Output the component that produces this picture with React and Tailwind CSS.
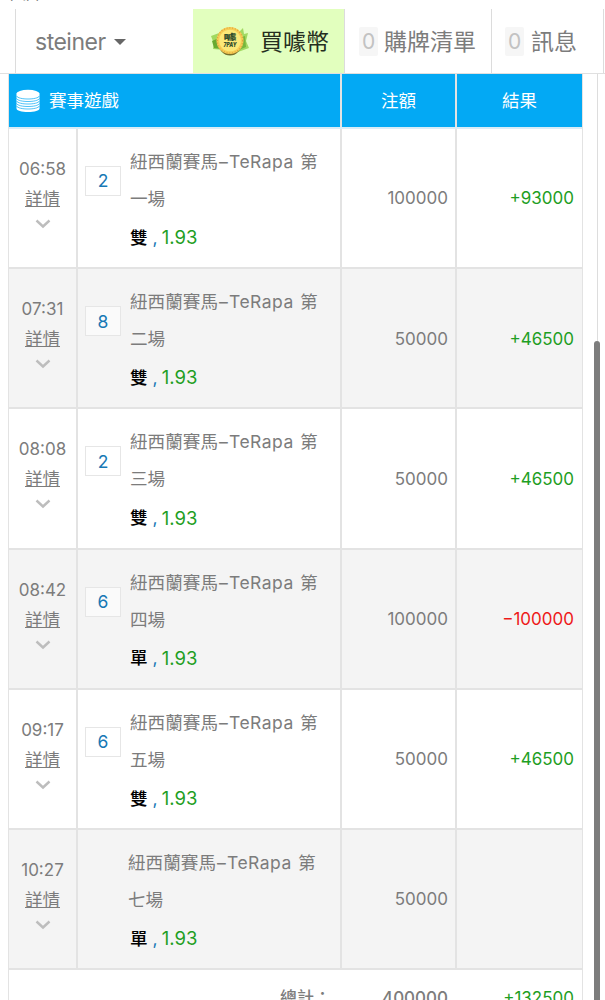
const rows = [
  { time: "06:58", no: "2", race: "一場", pick: "雙", stake: "100000", result: "+93000" },
  { time: "07:31", no: "8", race: "二場", pick: "雙", stake: "50000", result: "+46500" },
  { time: "08:08", no: "2", race: "三場", pick: "雙", stake: "50000", result: "+46500" },
  { time: "08:42", no: "6", race: "四場", pick: "單", stake: "100000", result: "−100000" },
  { time: "09:17", no: "6", race: "五場", pick: "雙", stake: "50000", result: "+46500" },
  { time: "10:27", no: "", race: "七場", pick: "單", stake: "50000", result: "" },
];

function Coin() {
  return (
    <svg width="40" height="34" viewBox="0 0 40 34" className="block shrink-0">
      <path d="M1 12 9 9 14 26 3 25 4 20Z" fill="#a0d960" />
      <path d="M2 17 9 14 12 25 4 24Z" fill="#68aa30" />
      <path d="M27 10 33 4 34 10 38 9 36 17 39 24 28 28Z" fill="#a2d962" />
      <path d="M29 14 35 12 36 23 29 26Z" fill="#76b63c" />
      <ellipse cx="20" cy="19.500" rx="11.500" ry="12" fill="#77702d" />
      <circle cx="20" cy="16.500" r="13.500" fill="#f6cd55" />
      <circle cx="20" cy="16.500" r="12.700" fill="none" stroke="#dda03c" strokeWidth="1.200" strokeDasharray="1 1.800" />
      <circle cx="20" cy="16.500" r="10.800" fill="#fbe878" />
      <text x="20" y="16" textAnchor="middle" fontSize="8.500" fontWeight="900" fontFamily="Noto Sans CJK TC" fill="#34502d" textLength="13" lengthAdjust="spacingAndGlyphs">噱</text>
      <text x="20" y="23" textAnchor="middle" fontSize="6.500" fontStyle="italic" fontWeight="900" fontFamily="Inter" fill="#34502d" textLength="13" lengthAdjust="spacingAndGlyphs">7PAY</text>
    </svg>
  );
}

function Stack() {
  return (
    <svg width="24" height="24" viewBox="0 0 24 24" className="block">
      <path d="M.5 4.500v15c0 2.200 5 3.500 11.500 3.500s11.500-1.300 11.500-3.500v-15" fill="white" />
      <ellipse cx="12" cy="4.500" rx="11.500" ry="3.700" fill="white" />
      <path d="M.5 7c1.200 2 6 3 11.500 3s10.300-1 11.500-3M.5 9.500c1.200 2 6 3 11.500 3s10.300-1 11.500-3M.5 12c1.200 2 6 3 11.500 3s10.300-1 11.500-3M.5 14.500c1.200 2 6 3 11.500 3s10.300-1 11.500-3M.5 17c1.200 2 6 3 11.500 3s10.300-1 11.500-3" fill="none" stroke="#03a9f4" strokeWidth=".7" />
    </svg>
  );
}

function Row({ row, index }) {
  return (
    <div className={`grid h-[140.200px] grid-cols-[69px_264px_115px_125px] border-b-2 border-[#e3e3e3] ${index % 2 ? "bg-[#f4f4f4]" : "bg-white"}`}>
      <div className="flex flex-col items-center border-r-2 border-[#e3e3e3] pt-[25px]">
        <span className="text-[17px] leading-[30px]">{row.time}</span>
        <span className="text-[17.500px] leading-[30px] underline underline-offset-1">詳情</span>
        <svg width="16" height="10" viewBox="0 0 16 10" className="mt-[5px]"><path d="M1.500 1.500 8 7.500 14.500 1.500" fill="none" stroke="#bdbdbd" strokeWidth="2.400" /></svg>
      </div>
      <div className="flex border-r-2 border-[#e3e3e3] pl-[7px]">
        <div className="w-[44px] pt-[37px]">
          {row.no && <div className="flex h-[30px] w-[36px] items-center justify-center border border-[#e6e6e6] bg-white/50 pt-px text-[17.500px] text-[#1778b5]">{row.no}</div>}
        </div>
        <div className="whitespace-nowrap pt-[14px]">
          <div className={row.no ? "pl-px" : "-ml-[1px]"}>
            <div className="flex h-[37px] text-[17.600px] leading-[37px]">
              <span>紐西蘭賽馬</span>
              <span className="inline-block w-[11px] text-center">–</span>
              <span className="w-[71px] text-[17.500px] tracking-[0.500px]">TeRapa </span>
              <span>第</span>
            </div>
            <div className="h-[37px] text-[17.600px] leading-[37px]">{row.race}</div>
          </div>
          <div className="flex h-[42px] items-center pl-px text-[17.600px] text-[#1e9e23]">
            <span className="font-medium text-black">{row.pick}</span>
            <span className="ml-[5px] mr-[4px] text-[#1778b5]">,</span><span className="text-[18.500px]">1.93</span>
          </div>
        </div>
      </div>
      <div className="flex items-center justify-end border-r-2 border-[#e3e3e3] pr-[7px] pt-[2px]">{row.stake}</div>
      <div className={`flex items-center justify-end pr-[8px] pt-[2px] ${row.result.startsWith("−") ? "text-[#ee1919]" : "text-[#1e9e23]"}`}>{row.result}</div>
    </div>
  );
}

function Count() {
  return <span className="flex h-[29px] w-[19px] items-center justify-center rounded-[2px] bg-[#f6f6f6] pt-[2px] text-[21px] text-[#c2c2c2]">0</span>;
}

export default function App() {
  return (
    <div className="flex h-[1000px] w-[605px] flex-col overflow-hidden bg-white font-['Inter','Noto_Sans_CJK_TC',sans-serif] text-[17px] font-normal text-[#7c7c7c]">
      <div className="h-[9px] shrink-0 overflow-hidden pl-[10px] text-[17px] leading-[18px]"><div className="-mt-[17px]">, (, ,</div></div>
      <header className="flex h-[65px] shrink-0 border-b border-[#e0e0e0] pl-[15px] text-[23px]">
        <div className="flex w-[178px] items-center border-l border-[#dcdcdc] pl-[19px] pt-[2px]">
          <span className="tracking-[-0.500px]">steiner</span>
          <svg width="12" height="6" viewBox="0 0 12 6" className="ml-[8px]"><path d="M0 0h12L6 6Z" fill="#666" /></svg>
        </div>
        <div className="flex w-[152px] items-center border-r border-[#dcdcdc] bg-[#e2ffbe] pl-[17px] text-[#252e20]"><Coin /><span className="ml-[10px] pt-[3px]">買噱幣</span></div>
        <div className="flex w-[147px] items-center border-r border-[#dcdcdc] pl-[14px]"><Count /><span className="ml-[6px] pt-[2px]">購牌清單</span></div>
        <div className="flex w-[112px] items-center border-r border-[#dcdcdc] pl-[13px]"><Count /><span className="ml-[7px] pt-[2px]">訊息</span></div>
      </header>
      <div className="flex h-[926px] shrink-0 pl-[8px]">
        <main className="w-[575px] shrink-0 border-x border-[#e3e3e3]">
          <div className="grid h-[55px] grid-cols-[333px_115px_125px] border-b-2 border-[#d9edf7] bg-[#03a9f4] text-[17.500px] text-white">
            <div className="flex items-center border-r-2 border-[#e3e3e3] pl-[7px]"><Stack /><span className="ml-[9px] pt-px">賽事遊戲</span></div>
            <div className="flex items-center justify-center border-r-2 border-[#e3e3e3] pt-px">注額</div>
            <div className="flex items-center justify-center pt-px">結果</div>
          </div>
          {rows.map((row, i) => <Row key={row.time} row={row} index={i} />)}
          <div className="grid grid-cols-[333px_115px_125px] pt-[15px] text-right text-[17px] leading-[26px]">
            <div className="pr-[11px] font-medium">總計：</div>
            <div className="pr-[9px] font-medium">400000</div>
            <div className="pr-[8px]"><span className="text-[#1e9e23]">+132500</span></div>
          </div>
        </main>
        <div className="ml-[10px] flex w-[8px] flex-col items-center">
          <div className="h-[267px] w-px bg-[#dddddd]" />
          <div className="w-[6px] grow rounded-t-full bg-[#7d7d7d]" />
        </div>
      </div>
    </div>
  );
}
